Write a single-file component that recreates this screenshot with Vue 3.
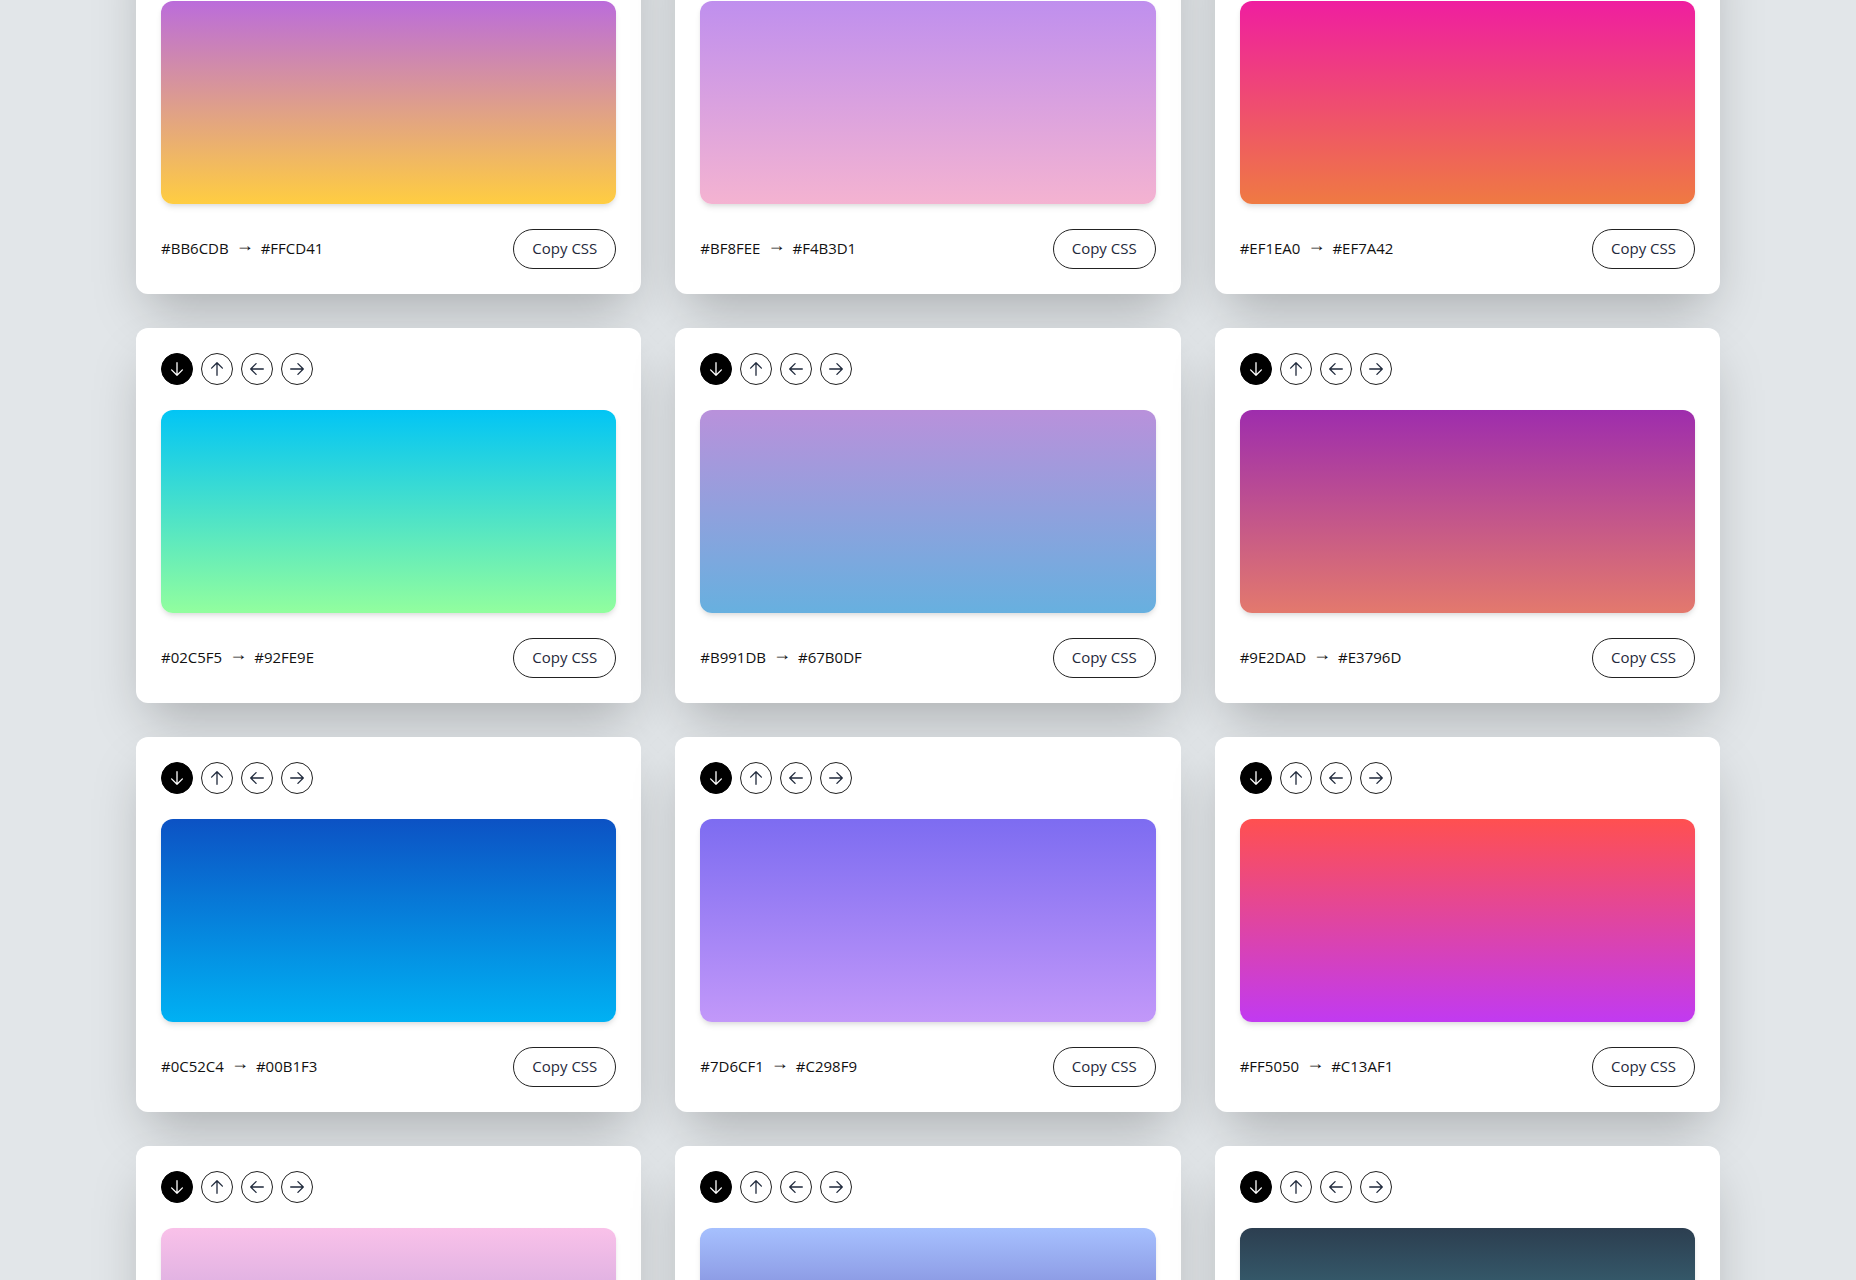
<template>
  <main class="page">
    <section class="gradient-grid">
      <article v-for="(item, index) in gradients" :key="index" class="card">
        <div class="directions">
          <button
            v-for="direction in directions"
            :key="direction.name"
            type="button"
            class="direction"
            :class="{ 'direction--active': selected[index] === direction.name }"
            :aria-label="direction.name"
            @click="selected[index] = direction.name"
          >
            <svg class="direction__icon" viewBox="0 0 20 20" aria-hidden="true">
              <path :d="direction.path" />
            </svg>
          </button>
        </div>

        <div class="preview" :style="{ backgroundImage: getGradient(item, index) }" />

        <footer v-if="!item.previewOnly" class="card__footer">
          <p class="colors">
            <span>{{ item.from }}</span>
            <span class="colors__arrow">→</span>
            <span>{{ item.to }}</span>
          </p>
          <button type="button" class="copy" @click="copyCss(item, index)">Copy CSS</button>
        </footer>
      </article>
    </section>
  </main>
</template>

<script setup>
import { ref } from 'vue'

const directions = [
  { name: 'bottom', path: 'M10 3.7v12.6M4.6 10.9l5.4 5.4 5.4-5.4' },
  { name: 'top', path: 'M10 16.3v-12.6M4.6 9.1L10 3.7 15.4 9.1' },
  { name: 'left', path: 'M16.3 10h-12.6M9.1 4.6L3.7 10 9.1 15.4' },
  { name: 'right', path: 'M3.7 10h12.6M10.9 4.6l5.4 5.4-5.4 5.4' },
]

const gradients = [
  { from: '#BB6CDB', to: '#FFCD41' },
  { from: '#BF8FEE', to: '#F4B3D1' },
  { from: '#EF1EA0', to: '#EF7A42' },
  { from: '#02C5F5', to: '#92FE9E' },
  { from: '#B991DB', to: '#67B0DF' },
  { from: '#9E2DAD', to: '#E3796D' },
  { from: '#0C52C4', to: '#00B1F3' },
  { from: '#7D6CF1', to: '#C298F9' },
  { from: '#FF5050', to: '#C13AF1' },
  { from: '#F9C1E9', to: '#A18CD1', previewOnly: true },
  { from: '#A6C0FE', to: '#4838A0', previewOnly: true },
  { from: '#2C3E50', to: '#4CA1AF', previewOnly: true },
]

const selected = ref(gradients.map(() => 'bottom'))

function getGradient(item, index) {
  return `linear-gradient(to ${selected.value[index]}, ${item.from}, ${item.to})`
}

function copyCss(item, index) {
  navigator.clipboard?.writeText(`background-image: ${getGradient(item, index)};`)
}
</script>

<style>
body {
  background: #e2e6e9;
}
</style>

<style scoped>
.page {
  height: 100vh;
  overflow: hidden;
  padding: 0 136px;
  color: #111;
  font-family: 'Open Sans', 'Noto Sans', sans-serif;
  font-size: 15px;
  line-height: 24px;
}

.gradient-grid {
  display: grid;
  grid-template-columns: repeat(3, minmax(0, 1fr));
  gap: 34px;
  margin-top: -81px;
}

.card {
  padding: 25px;
  border-radius: 12px;
  background: #fff;
  box-shadow: 0 25px 50px -12px rgba(0, 0, 0, 0.25);
}

.directions {
  display: flex;
  gap: 8px;
}

.direction {
  width: 32px;
  height: 32px;
  display: grid;
  place-items: center;
  padding: 0;
  border: 1px solid #222;
  border-radius: 50%;
  background: #fff;
  color: #1f293b;
  cursor: pointer;
}

.direction--active {
  border-color: #000;
  background: #000;
  color: #fff;
}

.direction__icon {
  width: 20px;
  height: 20px;
  fill: none;
  stroke: currentColor;
  stroke-width: 1.3;
  stroke-linecap: round;
  stroke-linejoin: round;
}

.preview {
  height: 203px;
  margin: 25px 0;
  border-radius: 12px;
  box-shadow: 0 4px 6px -1px rgba(0, 0, 0, 0.1), 0 2px 4px -1px rgba(0, 0, 0, 0.06);
}

.card__footer {
  display: flex;
  align-items: center;
  justify-content: space-between;
}

.colors {
  display: flex;
  gap: 7px;
  margin: 0;
  padding-bottom: 2px;
}

.colors__arrow {
  font-family: 'Liberation Sans', sans-serif;
  font-size: 18px;
  font-weight: 700;
  line-height: 18px;
}

.copy {
  height: 40px;
  padding: 0 18px 2px;
  border: 1px solid #222;
  border-radius: 20px;
  background: #fff;
  color: #1f293b;
  font: inherit;
  cursor: pointer;
}
</style>
